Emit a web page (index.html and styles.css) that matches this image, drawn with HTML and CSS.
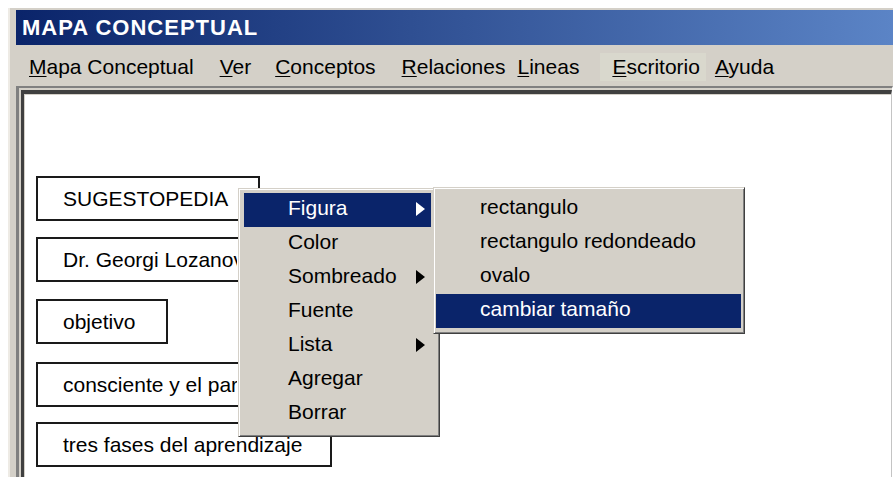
FILE: index.html
```html
<!DOCTYPE html>
<html lang="es">
<head>
<meta charset="utf-8">
<title>MAPA CONCEPTUAL</title>
<link rel="stylesheet" href="styles.css">
</head>
<body>
<div class="window">
  <div class="titlebar">MAPA CONCEPTUAL</div>
  <div class="menubar">
    <span class="mi"><u>M</u>apa Conceptual</span>
    <span class="mi"><u>V</u>er</span>
    <span class="mi"><u>C</u>onceptos</span>
    <span class="mi"><u>R</u>elaciones</span>
    <span class="mi"><u>L</u>ineas</span>
    <span class="mi active"><u>E</u>scritorio</span>
    <span class="mi"><u>A</u>yuda</span>
  </div>
  <div class="client">
    <div class="canvas">
      <div class="node" style="left:12px;top:82px;width:224px">SUGESTOPEDIA</div>
      <div class="node" style="left:12px;top:143px;width:290px"><span class="clip">Dr. Georgi Lozanov</span></div>
      <div class="node" style="left:12px;top:205px;width:132px">objetivo</div>
      <div class="node" style="left:12px;top:268px;width:340px"><span class="clip">consciente y el paraconsciente</span></div>
      <div class="node" style="left:12px;top:328px;width:296px">tres fases del aprendizaje</div>
    </div>
  </div>
</div>

<div class="menu menu-main">
  <div class="item selected"><span>Figura</span><i class="arrow"></i></div>
  <div class="item"><span>Color</span></div>
  <div class="item"><span>Sombreado</span><i class="arrow"></i></div>
  <div class="item"><span>Fuente</span></div>
  <div class="item"><span>Lista</span><i class="arrow"></i></div>
  <div class="item"><span>Agregar</span></div>
  <div class="item"><span>Borrar</span></div>
</div>

<div class="menu menu-sub">
  <div class="item"><span>rectangulo</span></div>
  <div class="item"><span>rectangulo redondeado</span></div>
  <div class="item"><span>ovalo</span></div>
  <div class="item selected"><span>cambiar tamaño</span></div>
</div>
</body>
</html>
```

FILE: styles.css
```css
* { box-sizing: border-box; }

html, body {
  margin: 0;
  padding: 0;
  background: #ffffff;
  overflow: hidden;
  width: 893px;
  height: 477px;
}

body {
  position: relative;
  font-family: "Liberation Sans", Arial, sans-serif;
  font-size: 21px;
  color: #000;
}

.window {
  margin: 8px 0 0 8px;
  width: 885px;
  height: 469px;
  background: #d4d0c8;
  border-left: 2px solid #eeebe5;
  padding: 2px 0 0 6px;
  display: flex;
  flex-direction: column;
}

.titlebar {
  height: 35px;
  line-height: 35px;
  padding-left: 6px;
  color: #fff;
  font-weight: bold;
  font-size: 22px;
  letter-spacing: 1px;
  background: linear-gradient(to right, #0a246a 0%, #2f4f92 45%, #5b84c6 100%);
  white-space: nowrap;
}

.menubar {
  height: 40px;
  padding-top: 4px;
  display: flex;
  align-items: center;
  white-space: nowrap;
}

.mi {
  line-height: 28px;
}
.mi u { text-underline-offset: 2px; text-decoration-thickness: 1px; }
.mi:nth-child(1) { margin-left: 13px; }
.mi:nth-child(2) { margin-left: 26px; }
.mi:nth-child(3) { margin-left: 24px; }
.mi:nth-child(4) { margin-left: 26px; }
.mi:nth-child(5) { margin-left: 12px; }
.mi:nth-child(6) { margin-left: 21px; }
.mi:nth-child(7) { margin-left: 9px; }

.mi.active {
  padding: 0 6px 0 12px;
  background: #d9d8cd;
}

.client {
  flex: 1;
  margin-top: 1px;
  display: flex;
  background: #d4d0c8;
  border-style: solid;
  border-width: 2px 1px 0 3px;
  border-color: #808080 #ffffff #ffffff #808080;
  padding: 2px 0 0 2px;
}

.canvas {
  flex: 1;
  position: relative;
  background: #fff;
  border-style: solid;
  border-width: 4px 1px 0 3px;
  border-color: #404040 #c4c4c4 #c4c4c4 #404040;
  box-shadow: inset 1px 1px 0 #d4d0c8;
  overflow: hidden;
}

.node {
  position: absolute;
  height: 45px;
  border: 2px solid #1a1a1a;
  background: #fff;
  padding-left: 25px;
  line-height: 41px;
  white-space: nowrap;
  overflow: hidden;
}

.clip {
  display: inline-block;
  vertical-align: top;
  max-width: 174px;
  overflow: hidden;
}

.menu {
  position: absolute;
  background: #d4d0c8;
  border: 1px solid;
  border-color: #d4d0c8 #404040 #404040 #d4d0c8;
  box-shadow: inset 1px 1px 0 #ffffff, inset -1px -1px 0 #808080;
  white-space: nowrap;
}

.menu-main {
  left: 238px;
  top: 188px;
  width: 202px;
  height: 249px;
  padding: 4px 8px 0 5px;
}

.menu-sub {
  left: 433px;
  top: 187px;
  width: 312px;
  height: 147px;
  padding: 4px 3px 0 2px;
}

.item {
  height: 34px;
  line-height: 30px;
  padding: 0 6px 4px 44px;
  display: flex;
  align-items: center;
  justify-content: space-between;
}

.item.selected {
  background: #0a246a;
  color: #fff;
}

.arrow {
  display: block;
  width: 0;
  height: 0;
  border-left: 9px solid #000;
  border-top: 7px solid transparent;
  border-bottom: 7px solid transparent;
  margin-top: 2px;
}

.item.selected .arrow {
  border-left-color: #fff;
}
```
